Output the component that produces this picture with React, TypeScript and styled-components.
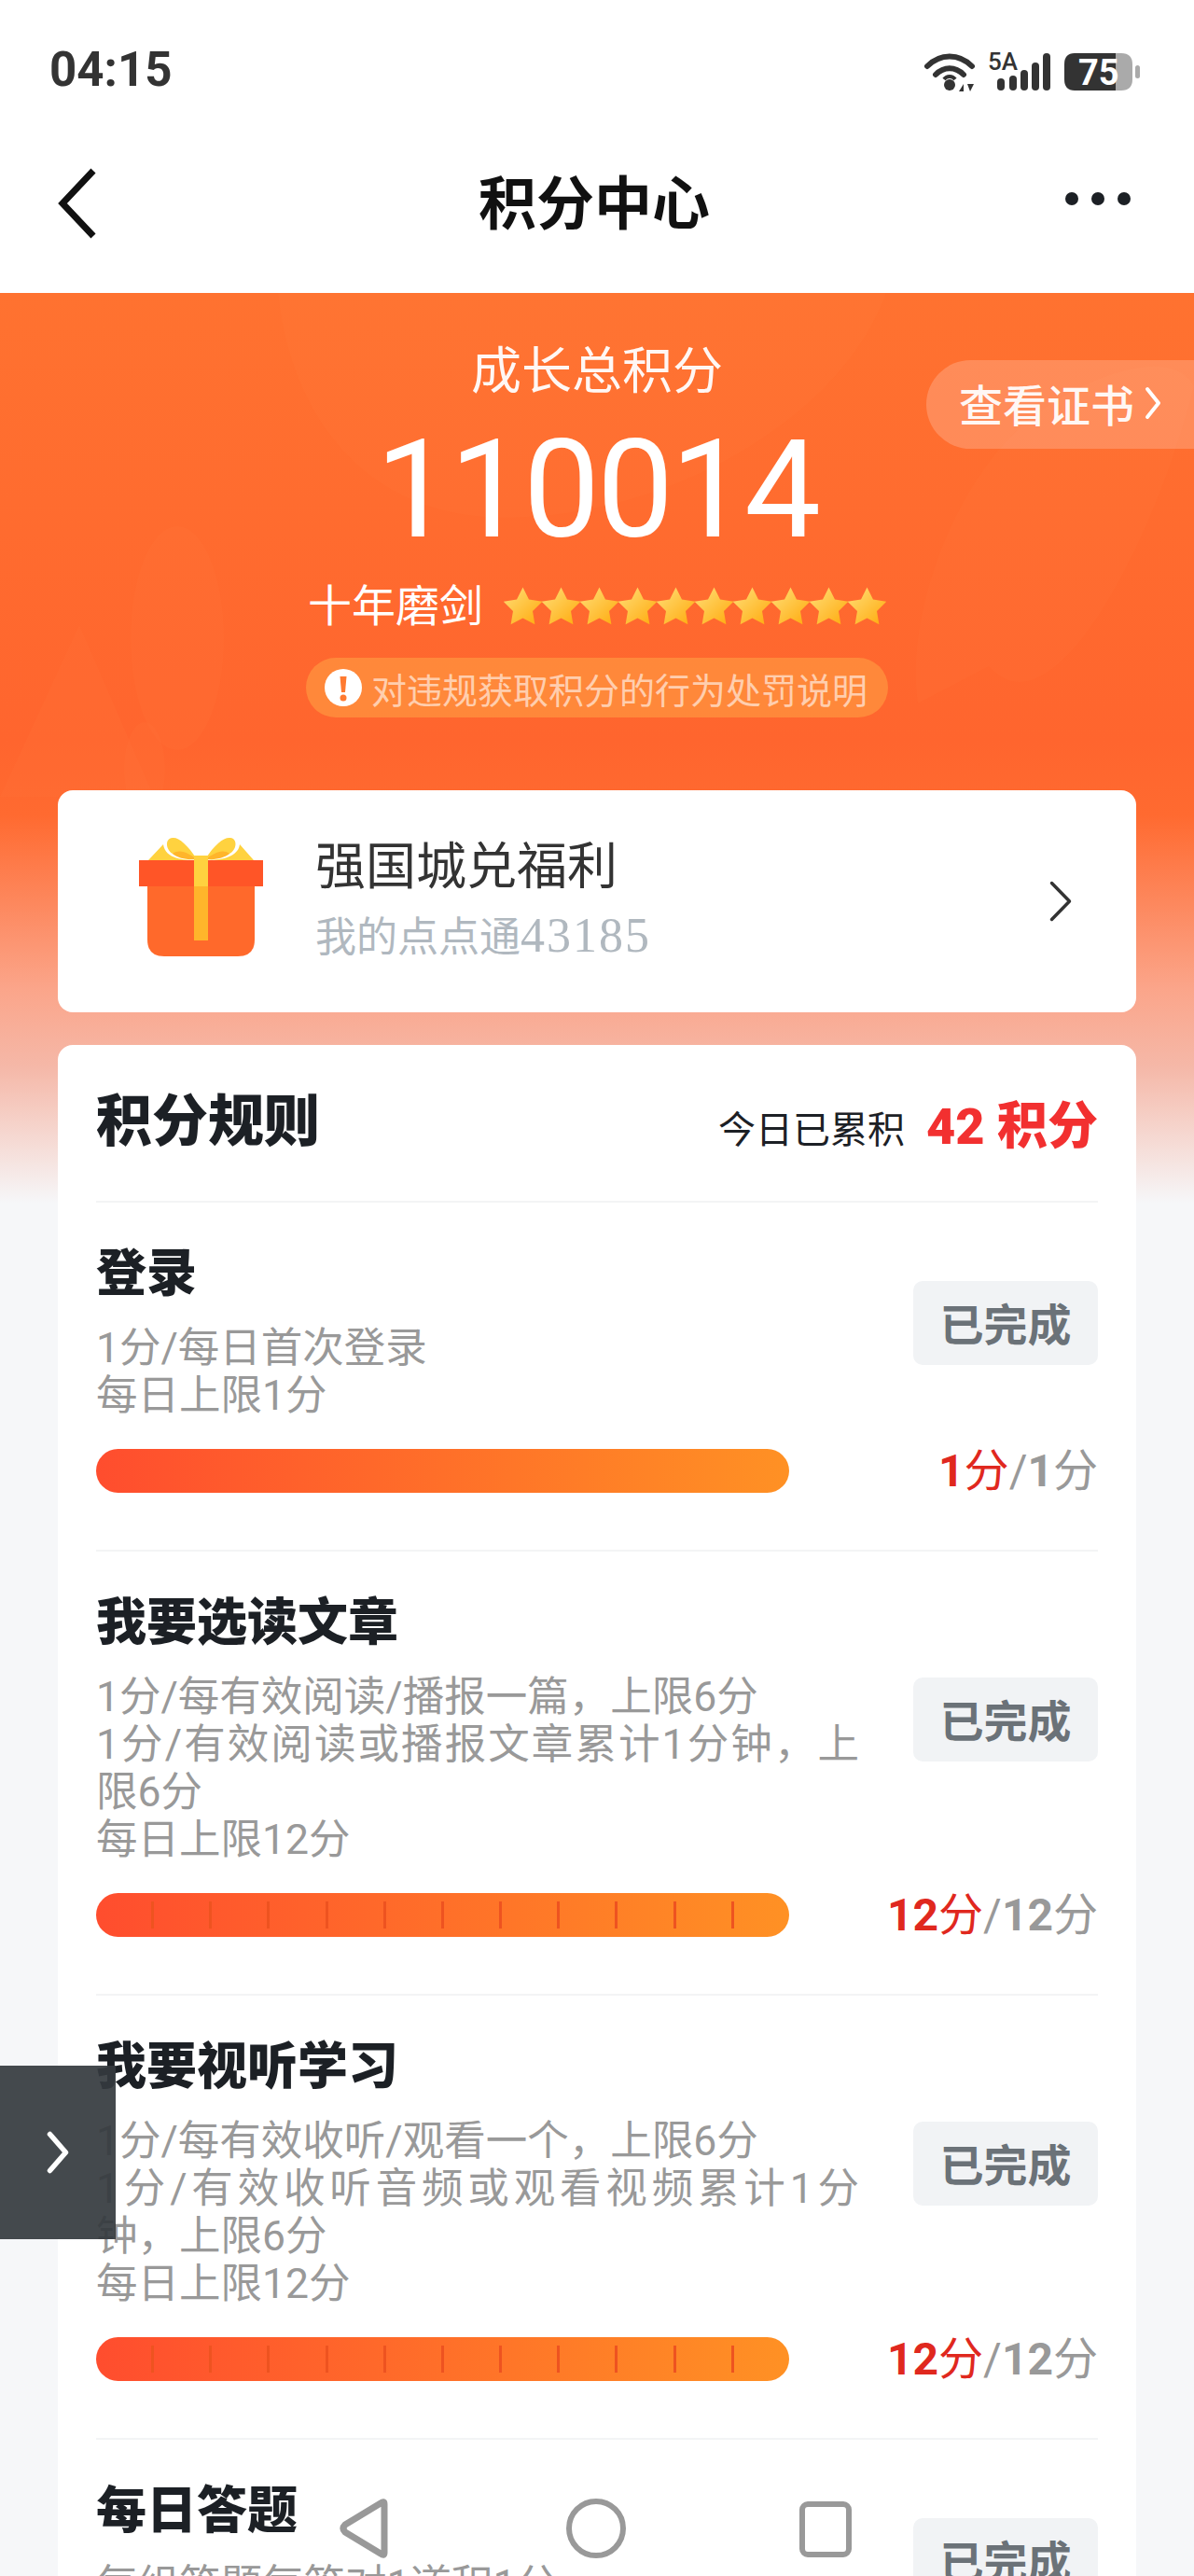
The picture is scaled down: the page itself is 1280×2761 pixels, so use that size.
import React from "react";
import styled, { createGlobalStyle } from "styled-components";

const sans = `Roboto, "Noto Sans CJK SC", sans-serif`;
const serif = `"Liberation Serif", "Noto Sans CJK SC", serif`;

const GlobalStyle = createGlobalStyle`
  html, body {
    margin: 0;
    padding: 0;
    background: #f6f7f9;
  }
  * {
    box-sizing: border-box;
  }
`;

const Page = styled.div`
  position: relative;
  width: 1280px;
  height: 2761px;
  overflow: hidden;
  background: #f6f7f9;
  font-family: ${sans};
`;

const Top = styled.header`
  background: #fff;
`;

const StatusBar = styled.div`
  height: 122px;
  padding: 52px 54px 0 53px;
  display: flex;
  justify-content: space-between;
  align-items: flex-start;
`;

const Time = styled.span`
  font-size: 51px;
  line-height: 46px;
  font-weight: 700;
  color: #333;
`;

const StatusSvg = styled.svg`
  margin-top: 5px;
  overflow: visible;
`;

const NavBar = styled.div`
  height: 192px;
  padding: 0 68px 0 62px;
  display: grid;
  grid-template-columns: 1fr auto 1fr;
  align-items: center;
`;

const NavRight = styled.div`
  display: flex;
  justify-content: flex-end;
  padding-bottom: 10px;
`;

const NavTitle = styled.h1`
  margin: 4px 0 0;
  font-size: 62px;
  line-height: 80px;
  font-weight: 700;
  color: #111;
`;

const Content = styled.main`
  position: relative;
  padding: 0 62px;
  background: linear-gradient(
      180deg,
      #ff7230 0,
      #ff652e 480px,
      #ff6a30 560px,
      #fba58a 746px,
      #f5b8a8 830px,
      #f6f7f9 976px
    )
    no-repeat top / 100% 976px;
`;

const Decor = styled.svg`
  position: absolute;
  left: 0;
  top: 0;
  width: 1280px;
  height: 540px;
`;

const Hero = styled.section`
  position: relative;
  padding: 55px 0 78px;
  display: flex;
  flex-direction: column;
  align-items: center;
  color: #fff;
`;

const HeroLabel = styled.div`
  font-size: 54px;
  line-height: 60px;
  opacity: 0.95;
`;

const Score = styled.div`
  margin-top: 27px;
  font-size: 146px;
  line-height: 140px;
  font-weight: 400;
  letter-spacing: -3px;
`;

const RankRow = styled.div`
  margin-top: 29px;
  display: flex;
  align-items: center;
  gap: 22px;
  font-size: 47px;
  line-height: 50px;
`;

const Notice = styled.div`
  margin-top: 30px;
  height: 64px;
  padding: 0 22px 0 20px;
  border-radius: 32px;
  display: flex;
  align-items: center;
  gap: 10px;
  background: rgba(255, 170, 70, 0.5);
  font-size: 38px;
  color: rgba(255, 255, 255, 0.6);
`;

const CertLink = styled.a`
  position: absolute;
  top: 72px;
  right: -62px;
  width: 287px;
  height: 95px;
  padding: 0 0 4px 35px;
  border-radius: 48px 0 0 48px;
  display: flex;
  align-items: center;
  gap: 10px;
  background: rgba(255, 255, 255, 0.2);
  font-size: 47px;
  font-weight: 500;
  color: rgba(255, 255, 255, 0.95);
`;

const Card = styled.section`
  position: relative;
  background: #fff;
  border-radius: 16px;
`;

const WelfareCard = styled(Card)`
  height: 238px;
  padding: 0 68px 0 87px;
  display: flex;
  align-items: center;
`;

const GiftSvg = styled.svg`
  flex-shrink: 0;
  margin-bottom: 11px;
`;

const WelfareText = styled.div`
  margin-left: 56px;
  flex: 1;
  font-family: ${serif};
`;

const WelfareTitle = styled.div`
  font-size: 54px;
  line-height: 66px;
  color: #333;
`;

const WelfareSub = styled.div`
  margin-top: 10px;
  font-size: 44px;
  line-height: 60px;
  color: #b0b8bf;
`;

const WelfareDigits = styled.span`
  font-size: 52px;
  letter-spacing: 2px;
`;

const RulesCard = styled(Card)`
  margin-top: 35px;
  padding: 0 41px;
`;

const RulesHeader = styled.div`
  height: 169px;
  padding-bottom: 14px;
  display: flex;
  align-items: center;
  justify-content: space-between;
  border-bottom: 2px solid #f3f4f5;
`;

const RulesTitle = styled.h2`
  margin: 0;
  font-family: ${serif};
  font-size: 60px;
  font-weight: 900;
  color: #1c2025;
`;

const Today = styled.div`
  display: flex;
  align-items: center;
  gap: 23px;
  padding-top: 12px;
  font-size: 40px;
  color: #1c2025;
`;

const TodayLabel = styled.span`
  margin-top: 10px;
`;

const TodayValue = styled.span`
  font-size: 54px;
  font-weight: 900;
  color: #f23030;
`;

const Item = styled.div`
  padding: 49px 0 61px;
  border-bottom: 2px solid #f3f4f5;
`;

const ItemRow = styled.div`
  display: flex;
  align-items: center;
  justify-content: space-between;
`;

const ItemText = styled.div`
  width: 818px;
`;

const ItemTitle = styled.h3`
  margin: 0;
  font-family: ${serif};
  font-size: 54px;
  line-height: 56px;
  font-weight: 900;
  color: #1c2025;
`;

const ItemDesc = styled.div`
  margin-top: 26px;
  font-size: 44.5px;
  line-height: 51px;
  color: #999;
`;

const DescLine = styled.div`
  text-align: justify;
`;

const DoneButton = styled.div`
  width: 198px;
  height: 90px;
  margin-bottom: 24px;
  padding-bottom: 4px;
  border-radius: 10px;
  display: flex;
  align-items: center;
  justify-content: center;
  background: #f1f3f5;
  font-size: 47px;
  font-weight: 700;
  color: #6b7278;
`;

const ProgressRow = styled.div`
  margin-top: 31px;
  display: flex;
  align-items: center;
  justify-content: space-between;
`;

const Bar = styled.div`
  width: 743px;
  height: 47px;
  border-radius: 24px;
  display: flex;
  align-items: center;
  justify-content: space-evenly;
  background: linear-gradient(90deg, #ff4d2e, #ff9124);
`;

const Tick = styled.i`
  width: 3px;
  height: 29px;
  background: #ee5320;
`;

const Points = styled.div`
  font-size: 48px;
  line-height: 47px;
  color: #999;
`;

const Earned = styled.span`
  color: #e0281e;
`;

const Num = styled.b`
  font-weight: 700;
`;

const SideTab = styled.div`
  position: absolute;
  left: 0;
  top: 2214px;
  width: 124px;
  height: 186px;
  display: flex;
  align-items: center;
  justify-content: center;
  background: rgba(52, 58, 62, 0.92);
`;

const SystemNav = styled.div`
  position: absolute;
  left: 0;
  top: 2676px;
  width: 1280px;
  height: 70px;
`;

const NavIcon = styled.svg<{ $left: number }>`
  position: absolute;
  top: 0;
  left: ${(p) => p.$left}px;
`;

const starPoints = (cx: number, cy: number, r: number) => {
  const pts: string[] = [];
  for (let i = 0; i < 10; i++) {
    const rad = i % 2 === 0 ? r : r * 0.5;
    const a = (Math.PI / 5) * i - Math.PI / 2;
    pts.push(`${(cx + rad * Math.cos(a)).toFixed(1)},${(cy + rad * Math.sin(a)).toFixed(1)}`);
  }
  return pts.join(" ");
};

const Stars = () => (
  <svg width="410" height="42" viewBox="0 0 410 42">
    <defs>
      <linearGradient id="starFill" x1="0" y1="0" x2="1" y2="1">
        <stop offset="0" stopColor="#ffdf7a" />
        <stop offset="1" stopColor="#ffa90a" />
      </linearGradient>
    </defs>
    {Array.from({ length: 10 }).map((_, i) => (
      <polygon key={i} points={starPoints(20.5 + i * 41, 22.5, 22)} fill="url(#starFill)" />
    ))}
  </svg>
);

const GiftIcon = () => (
  <GiftSvg width="133" height="128" viewBox="0 0 133 128">
    <path d="M10 25 L26 8 C28 24 50 25 59 25 Z" fill="#ffd23f" />
    <path d="M123 25 L108 8 C106 24 82 25 74 25 Z" fill="#ffd23f" />
    <path d="M62 24 C52 8 42 0 36 1 C27 2 29 14 36 18 C44 22 54 24 62 24 Z" fill="#ffd23f" />
    <path d="M71 24 C81 8 91 0 98 1 C106 2 105 14 97 18 C89 22 80 24 71 24 Z" fill="#ffd23f" />
    <path d="M36 18 C44 12 54 18 62 24 C52 25 42 23 36 18 Z" fill="#ffb52b" />
    <path d="M97 18 C89 12 80 18 71 24 C80 25 91 23 97 18 Z" fill="#ffb52b" />
    <path d="M9 53 H124 V110 Q124 128 106 128 H27 Q9 128 9 110 Z" fill="#ff692b" />
    <rect x="0" y="25" width="133" height="28" fill="#ff5527" />
    <rect x="59" y="20" width="15" height="33" fill="#ffd23f" />
    <rect x="59" y="53" width="15" height="58" fill="#ffb52b" />
  </GiftSvg>
);

const Chevron = ({ w, h, color, sw }: { w: number; h: number; color: string; sw: number }) => (
  <svg width={w} height={h} viewBox={`0 0 ${w} ${h}`} fill="none">
    <path
      d={`M${sw} ${sw} L${w - sw} ${h / 2} L${sw} ${h - sw}`}
      stroke={color}
      strokeWidth={sw}
      strokeLinecap="round"
      strokeLinejoin="round"
    />
  </svg>
);

const StatusIcons = () => (
  <StatusSvg width="236" height="44" viewBox="0 0 236 44">
    <g fill="none" stroke="#333" strokeWidth="6" strokeLinecap="round">
      <path d="M4 14 C18 0 38 0 52 14" />
      <path d="M13 23 C22 14 34 14 43 23" />
    </g>
    <circle cx="28" cy="34" r="6" fill="#333" />
    <path d="M22 28 C25 24 31 24 34 28" stroke="#333" strokeWidth="4" fill="none" />
    <path d="M38 41 L43 33 V41 Z M47 33 L54 33 L50 41 Z" fill="#333" />
    <text x="69" y="18" fontFamily="Roboto, sans-serif" fontSize="26" fontWeight="500" fill="#333">
      5A
    </text>
    <g fill="#333">
      <rect x="79" y="27" width="8" height="13" rx="4" />
      <rect x="92" y="24" width="8" height="16" rx="4" />
      <rect x="104" y="18" width="8" height="22" rx="4" />
      <rect x="116" y="10" width="8" height="30" rx="4" />
      <rect x="128" y="0" width="8" height="40" rx="4" />
    </g>
    <path d="M206 0 H212 Q224 0 224 12 V28 Q224 40 212 40 H206 Z" fill="#aaa" />
    <path d="M162 0 H206 V40 H162 Q151 40 151 28 V12 Q151 0 162 0 Z" fill="#333" />
    <rect x="227" y="13" width="5" height="14" rx="2.5" fill="#aaa" />
    <text x="166" y="34" fontFamily="Roboto, sans-serif" fontSize="38" fontWeight="700" fill="#fff">
      75
    </text>
  </StatusSvg>
);

const items = [
  { title: "登录", lines: ["1分/每日首次登录", "每日上限1分"], got: 1, max: 1, ticks: 0 },
  {
    title: "我要选读文章",
    lines: ["1分/每有效阅读/播报一篇，上限6分", "1分/有效阅读或播报文章累计1分钟，上限6分", "每日上限12分"],
    got: 12,
    max: 12,
    ticks: 11,
  },
  {
    title: "我要视听学习",
    lines: ["1分/每有效收听/观看一个，上限6分", "1分/有效收听音频或观看视频累计1分钟，上限6分", "每日上限12分"],
    got: 12,
    max: 12,
    ticks: 11,
  },
  { title: "每日答题", lines: ["每组答题每答对1道积1分", "每日上限5分"], got: 5, max: 5, ticks: 4 },
];

export default function App() {
  return (
    <Page>
      <GlobalStyle />
      <Top>
        <StatusBar>
          <Time>04:15</Time>
          <StatusIcons />
        </StatusBar>
        <NavBar>
          <svg width="42" height="76" viewBox="0 0 42 76" fill="none">
            <path d="M38 3 L5 38 L38 73" stroke="#111" strokeWidth="7" />
          </svg>
          <NavTitle>积分中心</NavTitle>
          <NavRight>
            <svg width="70" height="16" viewBox="0 0 70 16" fill="#1c2025">
              <circle cx="7" cy="8" r="7" />
              <circle cx="35" cy="8" r="7" />
              <circle cx="63" cy="8" r="7" />
            </svg>
          </NavRight>
        </NavBar>
      </Top>
      <Content>
        <Decor viewBox="0 0 1280 540" fill="#ffa050" fillOpacity="0.06">
          <path d="M298 0 C310 120 380 230 520 240 C700 250 900 140 950 0 Z" />
          <path d="M0 540 L85 356 L165 540 Z" />
          <ellipse cx="190" cy="370" rx="50" ry="120" />
          <ellipse cx="155" cy="510" rx="22" ry="50" />
          <path d="M984 440 C970 350 1020 200 1110 130 C1180 80 1260 60 1280 100 C1240 260 1130 480 1060 400 Z" />
        </Decor>
        <Hero>
          <HeroLabel>成长总积分</HeroLabel>
          <Score>110014</Score>
          <RankRow>
            十年磨剑
            <Stars />
          </RankRow>
          <Notice>
            <svg width="40" height="40" viewBox="0 0 40 40">
              <circle cx="20" cy="20" r="20" fill="#fff" />
              <path d="M16.5 8 H23.5 L22 25 H18 Z" fill="#ff7a30" />
              <circle cx="20" cy="31" r="3.5" fill="#ff7a30" />
            </svg>
            对违规获取积分的行为处罚说明
          </Notice>
          <CertLink>
            查看证书
            <Chevron w={20} h={38} color="#fff" sw={4} />
          </CertLink>
        </Hero>
        <WelfareCard>
          <GiftIcon />
          <WelfareText>
            <WelfareTitle>强国城兑福利</WelfareTitle>
            <WelfareSub>
              我的点点通<WelfareDigits>43185</WelfareDigits>
            </WelfareSub>
          </WelfareText>
          <Chevron w={26} h={46} color="#333" sw={3.5} />
        </WelfareCard>
        <RulesCard>
          <RulesHeader>
            <RulesTitle>积分规则</RulesTitle>
            <Today>
              <TodayLabel>今日已累积</TodayLabel>
              <TodayValue>42 积分</TodayValue>
            </Today>
          </RulesHeader>
          {items.map((item) => (
            <Item key={item.title}>
              <ItemRow>
                <ItemText>
                  <ItemTitle>{item.title}</ItemTitle>
                  <ItemDesc>
                    {item.lines.map((line) => (
                      <DescLine key={line}>{line}</DescLine>
                    ))}
                  </ItemDesc>
                </ItemText>
                <DoneButton>已完成</DoneButton>
              </ItemRow>
              <ProgressRow>
                <Bar>
                  {Array.from({ length: item.ticks }).map((_, i) => (
                    <Tick key={i} />
                  ))}
                </Bar>
                <Points>
                  <Earned>
                    <Num>{item.got}</Num>分
                  </Earned>
                  /<Num>{item.max}</Num>分
                </Points>
              </ProgressRow>
            </Item>
          ))}
        </RulesCard>
      </Content>
      <SideTab>
        <Chevron w={28} h={50} color="#fff" sw={5.5} />
      </SideTab>
      <SystemNav>
        <NavIcon $left={362} width="56" height="68" viewBox="0 0 56 68" fill="none">
          <path d="M50 8 V60 Q50 64 46 61 L8 38 Q4 34 8 30 L46 7 Q50 4 50 8 Z" stroke="#999" strokeWidth="7" strokeLinejoin="round" />
        </NavIcon>
        <NavIcon $left={605} width="68" height="68" viewBox="0 0 68 68" fill="none">
          <circle cx="34" cy="34" r="29" stroke="#999" strokeWidth="6" />
        </NavIcon>
        <NavIcon $left={854} width="62" height="68" viewBox="0 0 62 68" fill="none">
          <rect x="6" y="8" width="50" height="54" rx="6" stroke="#999" strokeWidth="6" />
        </NavIcon>
      </SystemNav>
    </Page>
  );
}
